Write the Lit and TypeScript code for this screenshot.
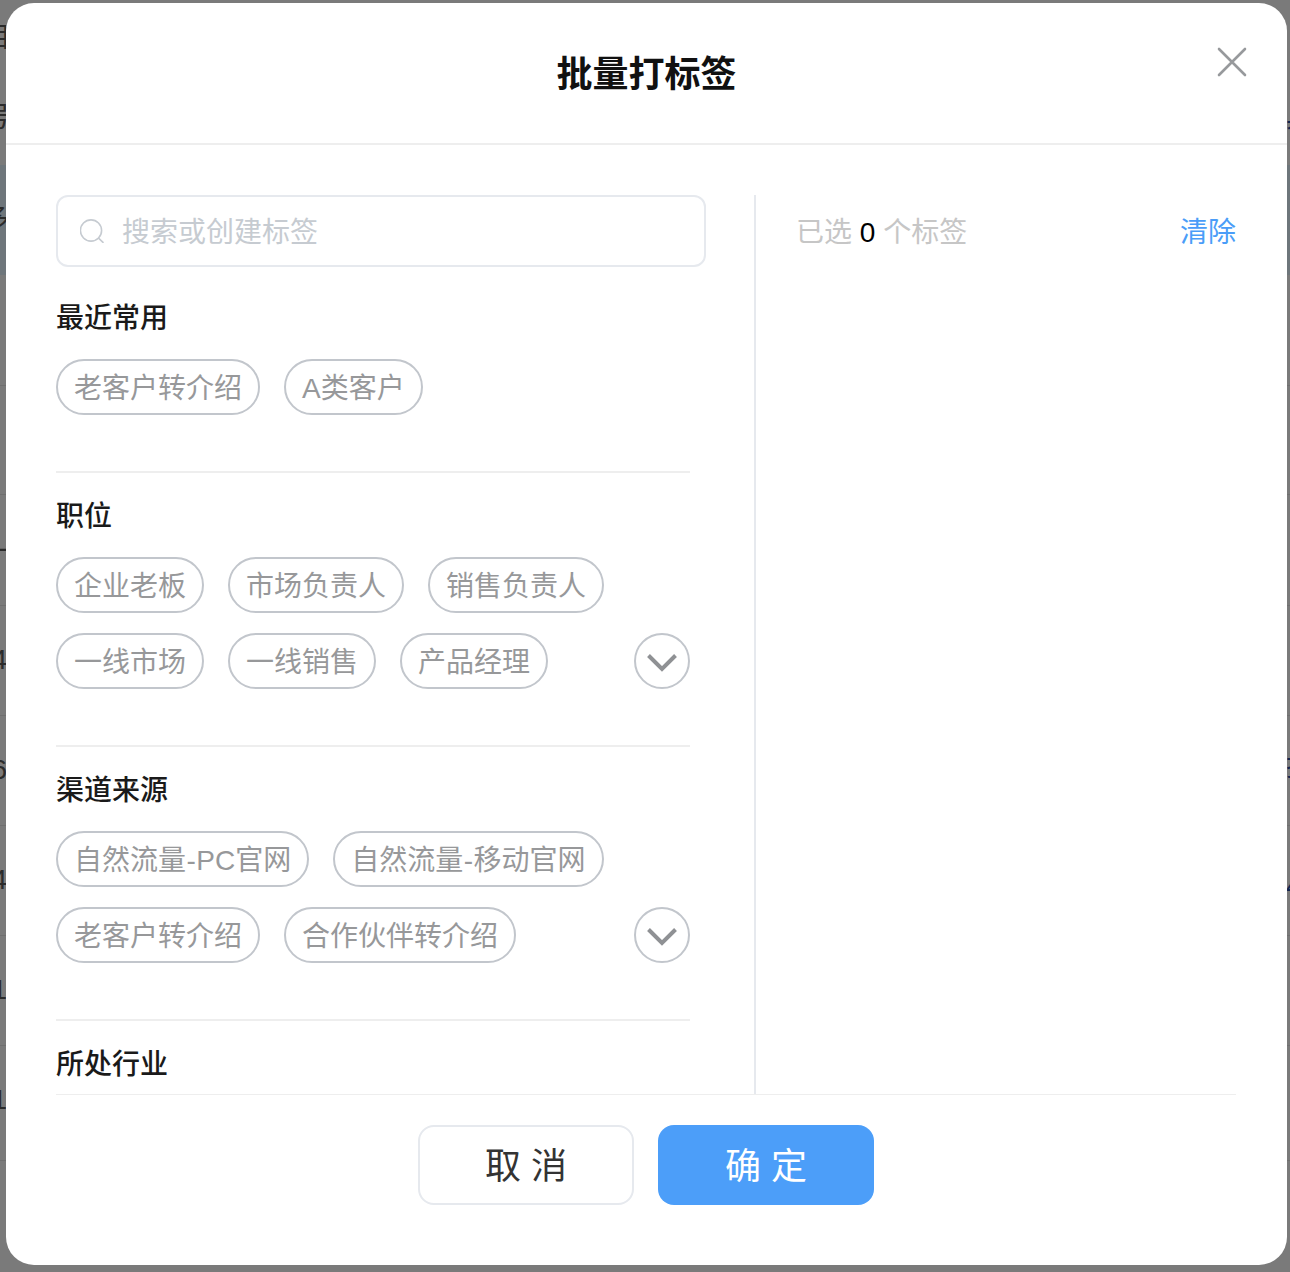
import { LitElement, html, css } from "lit";
import { customElement } from "lit/decorators.js";

const sections = [
  { title: "最近常用", tags: ["老客户转介绍", "A类客户"], more: false },
  { title: "职位", tags: ["企业老板", "市场负责人", "销售负责人", "一线市场", "一线销售", "产品经理"], more: true },
  { title: "渠道来源", tags: ["自然流量-PC官网", "自然流量-移动官网", "老客户转介绍", "合作伙伴转介绍"], more: true },
];

const leftGlyphs: [number, string, number][] = [
  [38, "目", 1279], [118, "号", 1279], [220, "多", 1280], [335, "：", 1280],
  [552, "一", 1280], [660, "4", 1283], [770, "6", 1283], [880, "4", 1283], [990, "1", 1283], [1100, "1", 1283],
];
const rightGlyphs: [number, string][] = [[118, "具"], [767, "技"], [886, "4"]];
const lines = [385, 494, 605, 715, 825, 935, 1045, 1160];

@customElement("app-root")
export class AppRoot extends LitElement {
  static styles = css`
    :host {
      display: block;
      position: relative;
      width: 1290px;
      height: 1272px;
      overflow: hidden;
      background: #7a7a7a;
      font-family: "Liberation Sans", "Noto Sans CJK SC", sans-serif;
      box-sizing: border-box;
      padding: 3px 3px 7px 6px;
    }
    * { box-sizing: border-box; }
    .backdrop { position: absolute; inset: 0; }
    .band { position: absolute; left: 0; right: 0; top: 165px; height: 110px; background: #6e767b; }
    .line { position: absolute; left: 0; right: 0; height: 1px; background: #6f6f6f; }
    .glyph { position: absolute; font-size: 28px; line-height: 32px; color: #2b2b2b; white-space: nowrap; }
    .glyph.r { left: 1286px; color: #14264f; }
    .modal {
      position: relative;
      height: 100%;
      background: #fff;
      border-radius: 28px;
      display: flex;
      flex-direction: column;
      overflow: hidden;
    }
    .head {
      height: 142px;
      flex: none;
      border-bottom: 2px solid #eeeeee;
      display: flex;
      justify-content: center;
      padding-top: 50px;
    }
    .head h1 {
      margin: 0;
      font-size: 36px;
      line-height: 44px;
      font-weight: 700;
      color: #111;
    }
    .close { position: absolute; left: 1210px; top: 43px; width: 32px; height: 32px; }
    .body {
      flex: 1;
      min-height: 0;
      display: flex;
      padding: 50px 51px 0 50px;
    }
    .left { width: 698px; flex: none; overflow: hidden; }
    .search {
      width: 650px;
      height: 72px;
      border: 2px solid #e6e9ee;
      border-radius: 12px;
      display: flex;
      align-items: center;
      padding-left: 22px;
      gap: 18px;
      font-size: 28px;
      color: #c6cbd1;
    }
    .search span { padding-bottom: 2px; }
    .search svg { width: 24px; height: 24px; flex: none; }
    .section { width: 634px; padding: 30px 0 56px; border-bottom: 2px solid #eeeeee; }
    .section + .section { padding-top: 22px; }
    .section:last-child { border-bottom: 0; }
    h2 {
      margin: 0 0 20px;
      padding-top: 2px;
      font-size: 28px;
      line-height: 40px;
      font-weight: 500;
      color: #1a1a1a;
    }
    .tags { display: flex; flex-wrap: wrap; gap: 20px 24px; }
    .tag {
      height: 56px;
      border: 2px solid #c2c6cc;
      border-radius: 28px;
      padding: 3px 16px 0;
      font-size: 28px;
      line-height: 50px;
      color: #97989a;
      white-space: nowrap;
    }
    .hy { padding: 0 0.5px; }
    .more {
      width: 56px;
      height: 56px;
      margin-left: auto;
      border: 2px solid #c2c6cc;
      border-radius: 50%;
      display: flex;
      align-items: center;
      justify-content: center;
      padding-top: 3px;
    }
    .more svg { width: 30px; height: 18px; }
    .right {
      flex: 1;
      border-left: 2px solid #e6e9ee;
      padding-left: 40px;
      height: 100%;
    }
    .count {
      height: 72px;
      display: flex;
      align-items: center;
      justify-content: space-between;
      font-size: 28px;
      color: #c6c6c6;
      padding-bottom: 2px;
    }
    .count b { font-weight: 400; color: #000; }
    .count a { color: #4a9df8; }
    .foot {
      flex: none;
      height: 171px;
      margin: 0 51px 0 50px;
      border-top: 1px solid #eeeeee;
      display: flex;
      justify-content: center;
      gap: 24px;
      padding-top: 30px;
    }
    .btn {
      width: 216px;
      height: 80px;
      border-radius: 16px;
      font-size: 36px;
      display: flex;
      align-items: center;
      justify-content: center;
      white-space: pre;
      padding-bottom: 4px;
    }
    .cancel { border: 2px solid #e6e9ee; color: #333; }
    .ok { background: #4c9ef9; color: #fff; }
  `;

  private label(t: string) {
    const i = t.indexOf("-");
    if (i < 0) return t;
    return html`${t.slice(0, i)}<span class="hy">-</span>${t.slice(i + 1)}`;
  }

  render() {
    return html`
      <div class="backdrop">
        <div class="band"></div>
        ${lines.map((y) => html`<div class="line" style="top:${y}px"></div>`)}
        ${leftGlyphs.map(([y, t, r]) => html`<span class="glyph" style="top:${y - 16}px;right:${r}px">${t}</span>`)}
        ${rightGlyphs.map(([y, t]) => html`<span class="glyph r" style="top:${y - 16}px">${t}</span>`)}
      </div>
      <div class="modal">
        <div class="head"><h1>批量打标签</h1></div>
        <svg class="close" viewBox="0 0 32 32" fill="none" stroke="#97999c" stroke-width="2.6" stroke-linecap="round">
          <path d="M3 3 L29 29 M29 3 L3 29" />
        </svg>
        <div class="body">
          <div class="left">
            <div class="search">
              <svg viewBox="0 0 24 24" fill="none" stroke="#c6cbd1" stroke-width="1.6" stroke-linecap="round">
                <circle cx="11" cy="11.5" r="10.6" />
                <path d="M18.8 19.4 L23 23.4" />
              </svg>
              <span>搜索或创建标签</span>
            </div>
            ${sections.map(
              (s) => html`<div class="section">
                <h2>${s.title}</h2>
                <div class="tags">
                  ${s.tags.map((t) => html`<span class="tag">${this.label(t)}</span>`)}
                  ${s.more
                    ? html`<span class="more"
                        ><svg viewBox="0 0 30 18" fill="none" stroke="#8f9194" stroke-width="4"
                          ><path d="M1.5 1.5 L15 15 L28.5 1.5" /></svg
                      ></span>`
                    : ""}
                </div>
              </div>`
            )}
            <div class="section"><h2>所处行业</h2></div>
          </div>
          <div class="right">
            <div class="count">
              <span>已选 <b>0</b> 个标签</span>
              <a>清除</a>
            </div>
          </div>
        </div>
        <div class="foot">
          <div class="btn cancel">取 消</div>
          <div class="btn ok">确 定</div>
        </div>
      </div>
    `;
  }
}
